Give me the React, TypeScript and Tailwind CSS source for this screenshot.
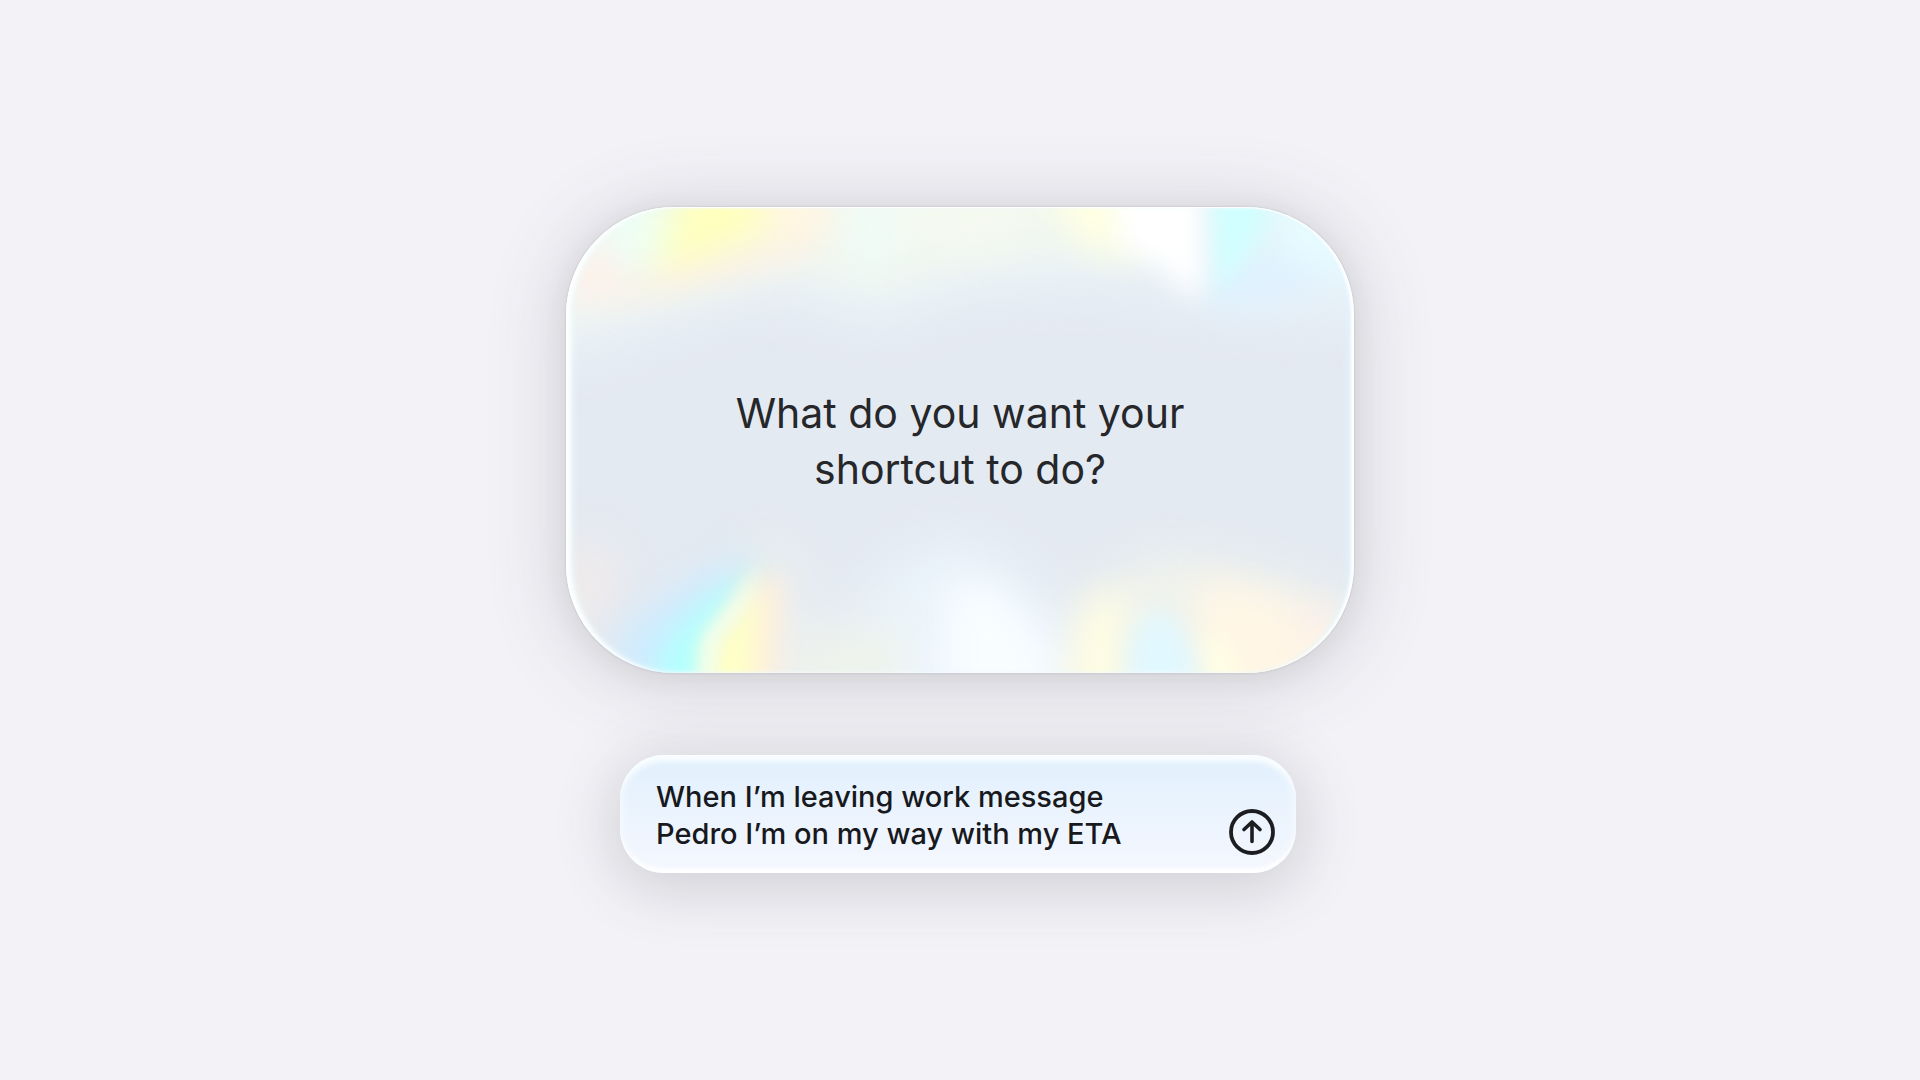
import { useState } from "react";

function GlowArtwork() {
  return (
    <svg
      aria-hidden="true"
      className="absolute inset-0 h-full w-full"
      colorInterpolationFilters="sRGB"
      preserveAspectRatio="none"
      viewBox="0 0 788 465"
    >
      <defs>
        <filter height="200%" id="soft" width="200%" x="-50%" y="-50%">
          <feGaussianBlur stdDeviation="24" />
        </filter>
        <filter height="200%" id="medium" width="200%" x="-50%" y="-50%">
          <feGaussianBlur stdDeviation="18" />
        </filter>
        <filter height="200%" id="light" width="200%" x="-50%" y="-50%">
          <feGaussianBlur stdDeviation="13" />
        </filter>
        <filter height="200%" id="crisp" width="200%" x="-50%" y="-50%">
          <feGaussianBlur stdDeviation="8" />
        </filter>
      </defs>

      <g filter="url(#soft)">
        <path d="M-60 -60H850V110L740 116L640 108L540 84L420 88L310 122L210 90L120 116L60 138L-60 170Z" fill="#e8f1f8" />
        <path d="M-60 -60H600V30L480 54L390 66L310 92L230 66L120 84L30 112L-60 120Z" fill="#f0f7f0" />
        <path d="M220 520L290 390L345 340L400 326L470 370L520 440L560 520Z" fill="#e9f2f8" />
        <path d="M330 520L350 386L390 350L460 390L500 440L530 520Z" fill="#eef6fe" />
        <path d="M480 520L520 390L590 346L690 362L850 424V520Z" fill="#f1f3ec" />
        <ellipse cx="20" cy="376" fill="#f4ebe8" rx="26" ry="44" />
        <ellipse cx="290" cy="456" fill="#eff3ea" rx="56" ry="36" />
        <path d="M180 330L226 350L250 520H170Z" fill="#eef1ee" />
      </g>

      <g filter="url(#medium)">
        <path d="M0 66L60 76L130 58L230 30L262 40L170 68L90 88L0 96Z" fill="#ffefe2" />
        <ellipse cx="26" cy="64" fill="#fff0eb" rx="24" ry="26" />
        <ellipse cx="72" cy="26" fill="#edfff5" rx="32" ry="34" />
        <path d="M190 -60H266V28L206 46Z" fill="#fff5e2" />
        <path d="M128 -60H196L200 26L146 48L86 68Z" fill="#ffffbc" />
        <ellipse cx="306" cy="26" fill="#effbf6" rx="34" ry="40" />
        <ellipse cx="400" cy="12" fill="#f5f9f0" rx="70" ry="30" />
        <path d="M460 -60H570V58L510 36Z" fill="#ffffe2" />
        <path d="M690 -60H850V70L720 60Z" fill="#e6fdff" />
        <path d="M650 60L730 46L770 70L700 100L640 100Z" fill="#dff1ff" />
      </g>

      <path d="M638 -60H716L694 36L648 90Z" fill="#d0ffff" filter="url(#light)" />
      <path d="M542 -60H632L638 50L634 96L594 60L554 38Z" fill="#ffffff" filter="url(#light)" />

      <g filter="url(#medium)">
        <path d="M190 336L110 384L54 424L50 480H110Z" fill="#cdecff" />
        <path d="M384 380L430 380L478 440L494 520H384Z" fill="#f8fdff" />
        <path d="M636 370L720 392L800 440V520H620Z" fill="#fff6e5" />
        <ellipse cx="750" cy="418" fill="#fbefe9" rx="26" ry="22" />
        <path d="M516 400L556 376L562 520H502Z" fill="#fffde2" />
      </g>

      <path d="M196 356L140 392L98 434L76 520H142L156 424Z" fill="#b4ffff" filter="url(#light)" />
      <path d="M194 364L216 376L212 440L206 520H168L176 410Z" fill="#ffeede" filter="url(#light)" />
      <path d="M194 370L192 420L186 520H136L140 436Z" fill="#ffffc6" filter="url(#light)" />
      <path d="M196 356L168 394L138 430L134 480H144L150 434L176 400Z" fill="#fbfff0" filter="url(#crisp)" />
      <path d="M634 420L664 440L680 520H640Z" fill="#ffffe4" filter="url(#light)" />
      <path d="M570 420Q592 388 614 418L630 450V520H562V446Z" fill="#e0f8ff" filter="url(#light)" />
    </svg>
  );
}

function PromptCard() {
  return (
    <section className="relative flex w-full max-w-[788px] items-center justify-center overflow-hidden rounded-[108px] bg-[#e4eaf2] px-8 pt-[178px] pb-[176px]">
      <GlowArtwork />
      <div
        aria-hidden="true"
        className="absolute inset-0 rounded-[108px] shadow-[inset_0_1px_1px_0_#ffffff,inset_5px_0_4px_-1px_#ffffff,inset_-4px_0_3px_-1px_#ffffff,inset_8px_0_8px_-3px_#f0ffff,inset_-8px_0_8px_-4px_#e2f6ff]"
      />
      <h1 className="relative max-w-[480px] text-center text-[41px] leading-[56px] text-[#25272a]">
        What do you want your shortcut to do?
      </h1>
    </section>
  );
}

function SendIcon() {
  return (
    <svg aria-hidden="true" className="size-[46px]" fill="none" stroke="currentColor" viewBox="0 0 46 46">
      <circle cx="23" cy="23" r="21" strokeWidth="3.8" />
      <path d="M23 32.5V13.5M15 20.5L23 13L31 20.5" strokeLinecap="round" strokeLinejoin="round" strokeWidth="3.6" />
    </svg>
  );
}

export default function App() {
  const [prompt, setPrompt] = useState("When I’m leaving work message Pedro I’m on my way with my ETA");

  return (
    <main className="flex min-h-screen flex-col items-center justify-center gap-[82px] bg-[#f3f2f7] px-6 font-['Inter','Liberation_Sans',sans-serif]">
      <div className="flex w-full max-w-[788px] rounded-[108px] shadow-[0_0_2px_0_rgba(90,90,95,0.3),0_4px_24px_0_rgba(70,70,75,0.08),0_6px_72px_8px_rgba(70,70,75,0.17)]">
        <PromptCard />
      </div>

      <form
        className="mr-1 flex w-full max-w-[676px] items-end rounded-[44px] bg-linear-to-b from-[#e1f0fd] to-[#f5f7fe] pt-[23px] pr-[21px] pb-[18px] pl-[36px] shadow-[inset_0_10px_5px_-4px_#f8fdff,inset_0_-7px_5px_-3px_#ffffff,inset_0_0_8px_2px_#f6fbff,0_10px_60px_6px_rgba(70,70,75,0.2)]"
        onSubmit={(event) => event.preventDefault()}
      >
        <textarea
          aria-label="Describe your shortcut"
          className="block h-[77px] min-w-0 flex-1 resize-none overflow-hidden bg-transparent pr-16 text-[29px] leading-[37px] font-medium text-[#17191d] outline-none"
          onChange={(event) => setPrompt(event.target.value)}
          value={prompt}
        />
        <button aria-label="Send" className="shrink-0 text-[#1b1d20]" type="submit">
          <SendIcon />
        </button>
      </form>
    </main>
  );
}
